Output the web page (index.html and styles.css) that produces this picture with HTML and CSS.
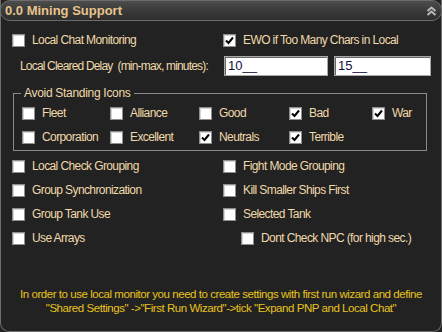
FILE: index.html
```html
<!DOCTYPE html>
<html>
<head>
<meta charset="utf-8">
<link rel="stylesheet" href="styles.css">
</head>
<body>
<div class="panel">
  <div class="header">
    <span class="title">0.0 Mining Support</span>
    <svg class="collapse" width="11" height="10" viewBox="0 0 11 10"><polyline points="1.5,5 5.5,1.5 9.5,5" fill="none" stroke="#b8b8b8" stroke-width="2"/><polyline points="1.5,9 5.5,5.5 9.5,9" fill="none" stroke="#b8b8b8" stroke-width="2"/></svg>
  </div>
  <div class="content">
    <div class="row two">
      <label class="cb"><span class="box"></span><span>Local Chat Monitoring</span></label>
      <label class="cb"><span class="box checked"><svg viewBox="0 0 11 11"><polyline points="2,5.5 4.5,8 9,2.5" fill="none" stroke="#000" stroke-width="2"/></svg></span><span>EWO if Too Many Chars in Local</span></label>
    </div>
    <div class="row delay">
      <span class="delay-label">Local Cleared Delay &nbsp;(min-max, minutes):</span>
      <div class="inputs">
        <span class="input w1">10__</span>
        <span class="input w2">15__</span>
      </div>
    </div>
    <div class="group">
      <span class="legend">Avoid Standing Icons</span>
      <div class="group-grid">
        <label class="cb"><span class="box"></span><span>Fleet</span></label>
        <label class="cb"><span class="box"></span><span>Alliance</span></label>
        <label class="cb"><span class="box"></span><span>Good</span></label>
        <label class="cb"><span class="box checked"><svg viewBox="0 0 11 11"><polyline points="2,5.5 4.5,8 9,2.5" fill="none" stroke="#000" stroke-width="2"/></svg></span><span>Bad</span></label>
        <label class="cb"><span class="box checked"><svg viewBox="0 0 11 11"><polyline points="2,5.5 4.5,8 9,2.5" fill="none" stroke="#000" stroke-width="2"/></svg></span><span>War</span></label>
        <label class="cb"><span class="box"></span><span>Corporation</span></label>
        <label class="cb"><span class="box"></span><span>Excellent</span></label>
        <label class="cb"><span class="box checked"><svg viewBox="0 0 11 11"><polyline points="2,5.5 4.5,8 9,2.5" fill="none" stroke="#000" stroke-width="2"/></svg></span><span>Neutrals</span></label>
        <label class="cb"><span class="box checked"><svg viewBox="0 0 11 11"><polyline points="2,5.5 4.5,8 9,2.5" fill="none" stroke="#000" stroke-width="2"/></svg></span><span>Terrible</span></label>
      </div>
    </div>
    <div class="options">
      <label class="cb"><span class="box"></span><span>Local Check Grouping</span></label>
      <label class="cb"><span class="box"></span><span>Fight Mode Grouping</span></label>
      <label class="cb"><span class="box"></span><span>Group Synchronization</span></label>
      <label class="cb"><span class="box"></span><span>Kill Smaller Ships First</span></label>
      <label class="cb"><span class="box"></span><span>Group Tank Use</span></label>
      <label class="cb"><span class="box"></span><span>Selected Tank</span></label>
      <label class="cb"><span class="box"></span><span>Use Arrays</span></label>
      <label class="cb indent"><span class="box"></span><span>Dont Check NPC (for high sec.)</span></label>
    </div>
    <p class="note">In order to use local monitor you need to create settings with first run wizard and define<br>"Shared Settings" -&gt;"First Run Wizard"-&gt;tick "Expand PNP and Local Chat"</p>
  </div>
</div>
</body>
</html>
```
FILE: styles.css
```css
html, body {
  margin: 0;
  padding: 0;
  background: #222222;
}
body {
  font-family: "Liberation Sans", Arial, sans-serif;
  font-size: 12px;
  color: #f0d9aa;
}
.panel {
  width: 442px;
  height: 332px;
  box-sizing: border-box;
  background: #222222;
  border: 1px solid #6e6e6e;
  border-top: none;
  border-radius: 0 0 9px 9px;
  display: flex;
  flex-direction: column;
}
.header {
  height: 21px;
  margin: 0 -1px;
  box-sizing: border-box;
  border: 1px solid #6c6c6c;
  border-radius: 10px;
  background: linear-gradient(#4d4d4d, #383838 55%, #2e2e2e);
  display: flex;
  align-items: center;
  justify-content: space-between;
  padding: 0 4px 0 4px;
}
.title {
  font-weight: bold;
  font-size: 13px;
  color: #e8c48c;
  letter-spacing: 0;
}
.collapse {
  display: block;
}
.content {
  display: flex;
  flex-direction: column;
  padding: 9px 0 0 11px;
}
.cb {
  display: flex;
  align-items: center;
  gap: 7px;
  letter-spacing: -0.6px;
  white-space: nowrap;
}
.box {
  width: 13px;
  height: 13px;
  box-sizing: border-box;
  border: 1px solid #8e8e8e;
  background: #ffffff;
  box-shadow: inset 1px 1px 0 #d4d4d4;
  flex: none;
  display: flex;
  align-items: center;
  justify-content: center;
}
.box svg {
  width: 11px;
  height: 11px;
  display: block;
}
.row {
  height: 20px;
  display: flex;
  align-items: center;
}
.two {
  display: grid;
  grid-template-columns: 211px 1fr;
}
.delay {
  margin-top: 6px;
  justify-content: space-between;
  padding-left: 8px;
}
.delay-label {
  letter-spacing: -0.82px;
}
.inputs {
  display: flex;
  gap: 6px;
  margin-right: 10px;
}
.input {
  height: 20px;
  box-sizing: border-box;
  background: #ffffff;
  border: 1px solid #a8a8a8;
  box-shadow: inset 1px 1px 0 #6a6a6a;
  color: #101040;
  font-size: 13px;
  line-height: 18px;
  padding-left: 3px;
  letter-spacing: 0;
}
.w1 { width: 104px; }
.w2 { width: 97px; }
.group {
  position: relative;
  margin: 17px 0 0 1px;
  width: 414px;
  box-sizing: border-box;
  border: 1px solid #8a8a8a;
  padding: 7px 0 0 8px;
  height: 58px;
}
.legend {
  position: absolute;
  top: -8px;
  left: 7px;
  padding: 0 3px;
  background: #222222;
  line-height: 14px;
  letter-spacing: -0.3px;
}
.group-grid {
  display: grid;
  grid-template-columns: 88px 89px 90px 83px auto;
  grid-auto-rows: 24px;
  align-items: center;
}
.options {
  margin-top: 3px;
  display: grid;
  grid-template-columns: 211px 1fr;
  grid-auto-rows: 24px;
  align-items: center;
}
.indent {
  padding-left: 18px;
}
.note {
  margin: 37px 0 0 -11px;
  text-align: center;
  color: #e8c21c;
  font-size: 11.5px;
  line-height: 14px;
  letter-spacing: -0.45px;
}
```
